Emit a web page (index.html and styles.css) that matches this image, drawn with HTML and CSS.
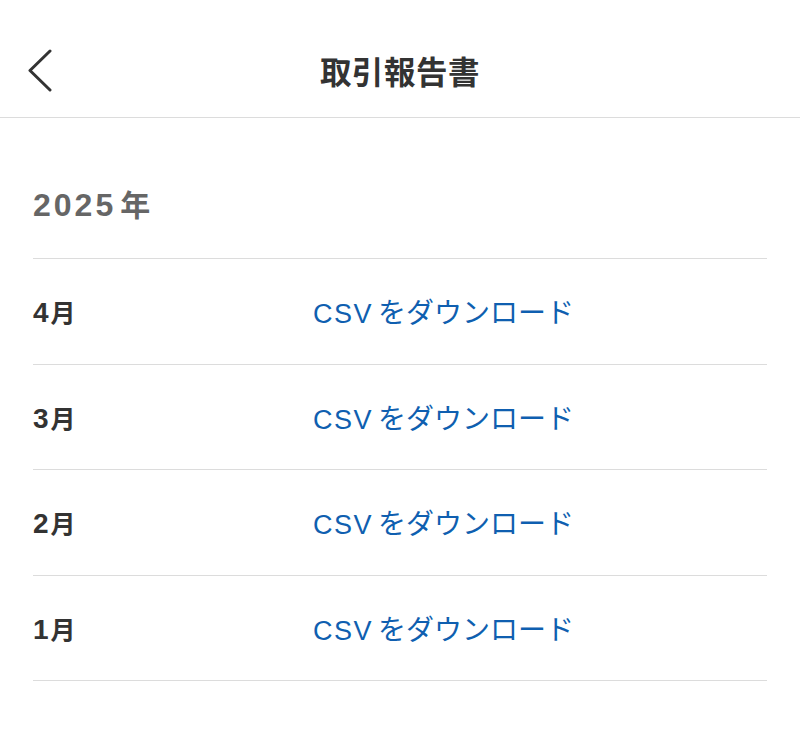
FILE: index.html
```html
<!DOCTYPE html>
<html lang="ja">
<head>
<meta charset="utf-8">
<title>取引報告書</title>
<link rel="stylesheet" href="styles.css">
</head>
<body>
<header class="topbar">
  <button class="back" aria-label="戻る">
    <svg width="30" height="44" viewBox="0 0 30 44"><path d="M22 2 L2 21.5 L22 41" fill="none" stroke="#333" stroke-width="3" stroke-linecap="round" stroke-linejoin="round"/></svg>
  </button>
  <h1 class="title">取引報告書</h1>
</header>
<main class="content">
  <h2 class="year"><span class="yr-num">2025</span>年</h2>
  <ul class="list">
    <li class="row"><span class="month"><span class="num">4</span>月</span><a class="dl" href="#"><span class="latin">CSV</span>をダウンロード</a></li>
    <li class="row"><span class="month"><span class="num">3</span>月</span><a class="dl" href="#"><span class="latin">CSV</span>をダウンロード</a></li>
    <li class="row"><span class="month"><span class="num">2</span>月</span><a class="dl" href="#"><span class="latin">CSV</span>をダウンロード</a></li>
    <li class="row"><span class="month"><span class="num">1</span>月</span><a class="dl" href="#"><span class="latin">CSV</span>をダウンロード</a></li>
  </ul>
</main>
</body>
</html>
```
FILE: styles.css
```css
* { box-sizing: border-box; }
html, body { margin: 0; padding: 0; background: #fff; }
body {
  font-family: "Liberation Sans", "Noto Sans CJK JP", sans-serif;
  color: #333;
  width: 800px;
}
.topbar {
  position: relative;
  height: 118px;
  padding-top: 26px;
  border-bottom: 1px solid #dcdcdc;
  display: flex;
  justify-content: center;
}
.back {
  position: absolute;
  left: 28px;
  top: 49px;
  border: 0;
  background: none;
  padding: 0;
  width: 30px;
  height: 44px;
}
.back svg { display: block; }
.title {
  margin: 0;
  height: 89px;
  line-height: 89px;
  font-family: "Noto Sans CJK JP", sans-serif;
  font-size: 31.5px;
  font-weight: 700;
  color: #333;
  letter-spacing: 0.5px;
}
.content { padding: 0 33px; }
.year {
  margin: 0;
  padding-top: 67px;
  height: 141px;
  line-height: 40px;
  font-size: 30px;
  font-weight: 700;
  color: #666;
  border-bottom: 1px solid #dcdcdc;
}
.yr-num {
  font-size: 32px;
  letter-spacing: 3px;
  margin-right: 4px;
}
.list { list-style: none; margin: 0; padding: 0; }
.row {
  display: grid;
  grid-template-columns: 280px 1fr;
  align-items: center;
  height: 105.5px;
  border-bottom: 1px solid #dcdcdc;
}
.month {
  font-size: 25px;
  font-weight: 700;
  color: #333;
}
.num {
  font-size: 28px;
  margin-right: 2px;
}
.dl {
  font-size: 28px;
  color: #0f5fb0;
  text-decoration: none;
}
.latin {
  font-size: 27px;
  letter-spacing: 1.5px;
  margin-right: 5px;
}
```
